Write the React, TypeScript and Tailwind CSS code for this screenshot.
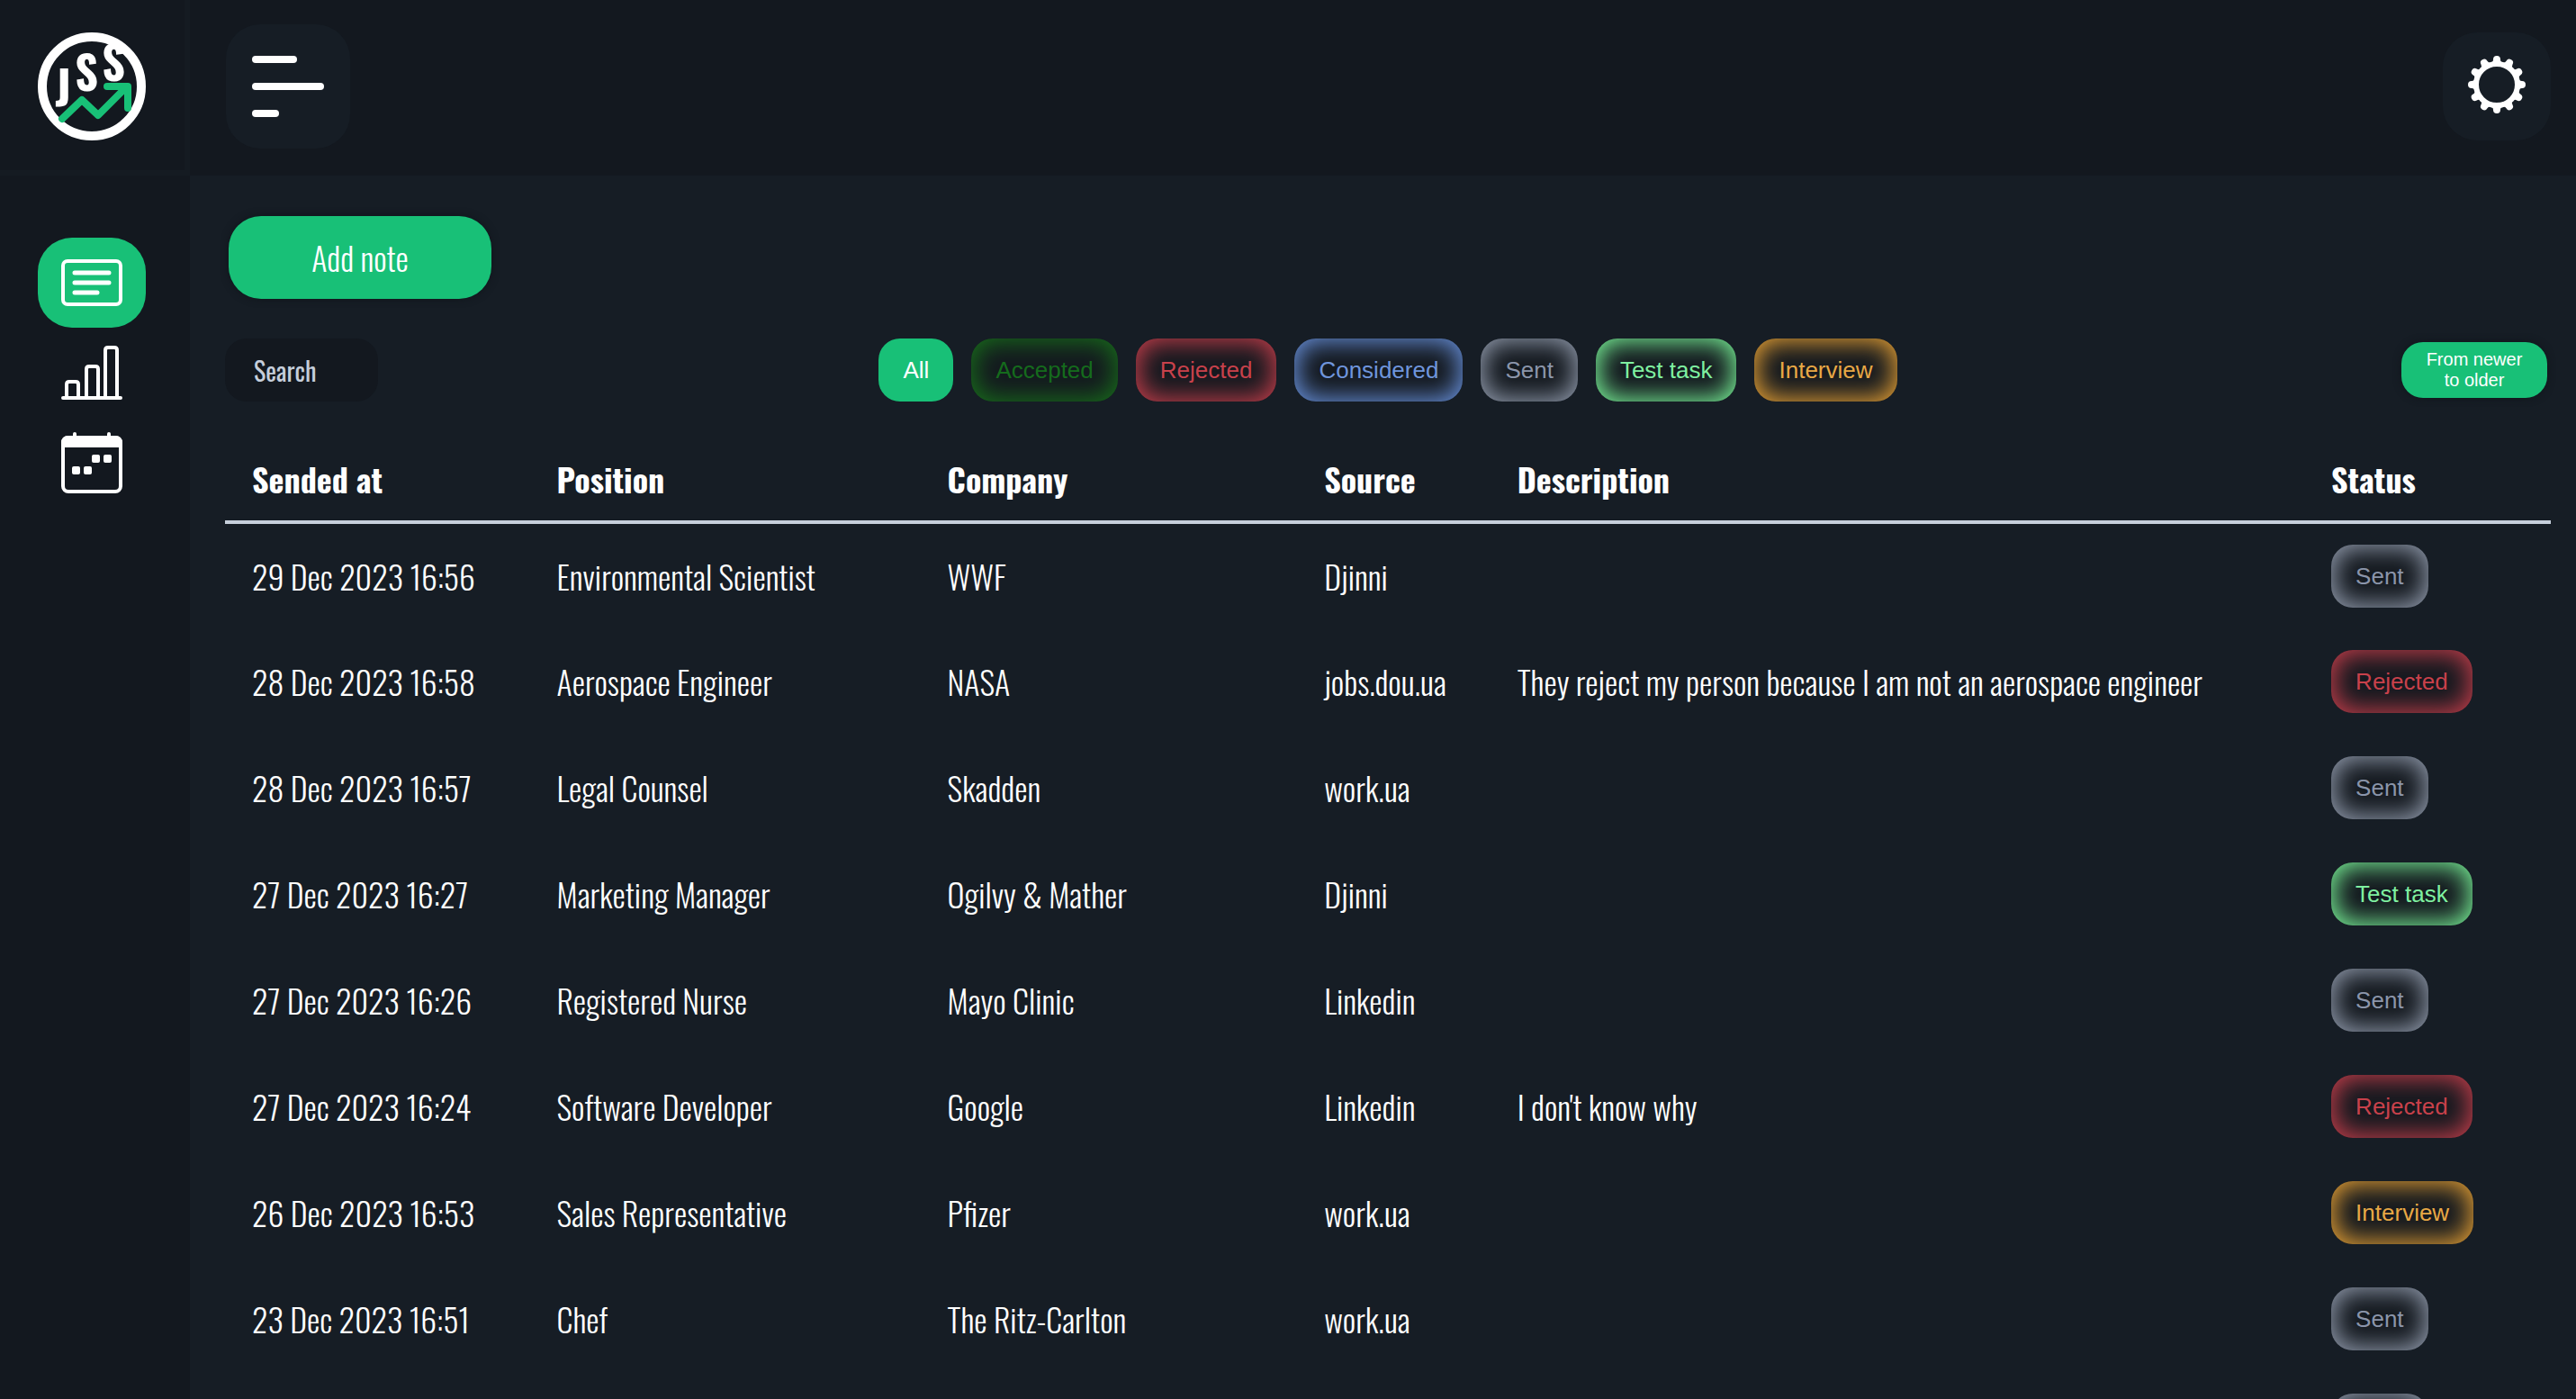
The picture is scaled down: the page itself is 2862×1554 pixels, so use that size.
import React from "react";

type Status = "Accepted" | "Rejected" | "Considered" | "Sent" | "Test task" | "Interview";

const tones: Record<Status, string> = {
  Accepted: "text-[#156b1c] shadow-[inset_0_0_28px_3px_#18701b]",
  Rejected: "text-[#c8414b] shadow-[inset_0_0_28px_3px_#cb3f4c]",
  Considered: "text-[#6f95dc] shadow-[inset_0_0_28px_3px_#6b95e2]",
  Sent: "text-[#8b95aa] shadow-[inset_0_0_28px_3px_#97a1b3]",
  "Test task": "text-[#7ff0a0] shadow-[inset_0_0_28px_3px_#7dfc9c]",
  Interview: "text-[#e8a845] shadow-[inset_0_0_28px_3px_#eda535]",
};

const filters: Status[] = ["Accepted", "Rejected", "Considered", "Sent", "Test task", "Interview"];

type Note = { date: string; position: string; company: string; source: string; description?: string; status: Status };

const notes: Note[] = [
  { date: "29 Dec 2023 16:56", position: "Environmental Scientist", company: "WWF", source: "Djinni", status: "Sent" },
  { date: "28 Dec 2023 16:58", position: "Aerospace Engineer", company: "NASA", source: "jobs.dou.ua", description: "They reject my person because I am not an aerospace engineer", status: "Rejected" },
  { date: "28 Dec 2023 16:57", position: "Legal Counsel", company: "Skadden", source: "work.ua", status: "Sent" },
  { date: "27 Dec 2023 16:27", position: "Marketing Manager", company: "Ogilvy & Mather", source: "Djinni", status: "Test task" },
  { date: "27 Dec 2023 16:26", position: "Registered Nurse", company: "Mayo Clinic", source: "Linkedin", status: "Sent" },
  { date: "27 Dec 2023 16:24", position: "Software Developer", company: "Google", source: "Linkedin", description: "I don't know why", status: "Rejected" },
  { date: "26 Dec 2023 16:53", position: "Sales Representative", company: "Pfizer", source: "work.ua", status: "Interview" },
  { date: "23 Dec 2023 16:51", position: "Chef", company: "The Ritz-Carlton", source: "work.ua", status: "Sent" },
  { date: "", position: "", company: "", source: "", status: "Sent" },
];

function Logo() {
  return (
    <svg viewBox="0 0 120 120" className="size-[120px]" role="img" aria-label="JSS">
      <circle cx="60" cy="60" r="55" fill="none" stroke="#fff" strokeWidth="10" />
      <g fill="#fff" fontWeight="700" fontSize="50" textAnchor="middle">
        <text x="28" y="81">J</text>
        <text x="54" y="65">S</text>
        <text x="84" y="54">S</text>
      </g>
      <path d="M27 96 49 75 67 92 98 61M77 60H100V84" fill="none" stroke="#18c077" strokeWidth="8" strokeLinecap="round" strokeLinejoin="round" />
    </svg>
  );
}

const teeth = Array.from({ length: 12 }, (_, i) => i * 30);

function GearIcon() {
  return (
    <svg viewBox="0 0 64 64" className="size-16" fill="#fff" aria-hidden="true">
      <circle cx="32" cy="32" r="23" fill="none" stroke="#fff" strokeWidth="6" />
      {teeth.map((angle) => (
        <path key={angle} d="M25 8Q28 7 28 4A4 4 0 0 1 36 4Q36 7 39 8V9H25Z" transform={`rotate(${angle} 32 32)`} />
      ))}
    </svg>
  );
}

function ListIcon() {
  return (
    <svg viewBox="0 0 68 52" className="w-[68px]" fill="none" stroke="#fff" strokeWidth="4" strokeLinecap="round" aria-hidden="true">
      <rect x="2" y="2" width="64" height="48" rx="5" />
      <path d="M15 15H53M15 26H53M15 37H40" strokeWidth="5" />
    </svg>
  );
}

function ChartIcon() {
  return (
    <svg viewBox="0 0 68 60" className="w-[68px]" fill="none" stroke="#fff" strokeWidth="4" strokeLinecap="round" aria-hidden="true">
      <path d="M2 58H66M6 57V43Q6 40 9 40H16Q19 40 19 43V57M28 57V26Q28 23 31 23H38Q41 23 41 26V57M49 57V5Q49 2 52 2H59Q62 2 62 5V57" />
    </svg>
  );
}

function CalendarIcon() {
  return (
    <svg viewBox="0 0 68 68" className="w-[68px]" aria-hidden="true">
      <rect x="2" y="6" width="64" height="60" rx="6" fill="none" stroke="#fff" strokeWidth="4" />
      <path d="M0 17V12Q0 4 8 4H13V2a2 2 0 0 1 4 0V4H51V2a2 2 0 0 1 4 0V4H60Q68 4 68 12V17Z" fill="#fff" />
      <g fill="#fff">
        <rect x="34" y="25" width="9" height="9" rx="2" />
        <rect x="47" y="25" width="9" height="9" rx="2" />
        <rect x="12" y="38" width="9" height="9" rx="2" />
        <rect x="25" y="38" width="9" height="9" rx="2" />
      </g>
    </svg>
  );
}

function NavLink({ label, active, children }: { label: string; active?: boolean; children: React.ReactNode }) {
  return (
    <a href="#" aria-label={label} className={`flex h-[100px] w-[120px] items-center justify-center rounded-[38px] ${active ? "bg-[#18c077]" : ""}`}>
      {children}
    </a>
  );
}

const pill = "inline-flex h-[70px] items-center rounded-[24px] px-[27px] text-[26px] font-normal font-['Liberation_Sans',Arial,sans-serif]";

export default function App() {
  return (
    <div className="flex h-screen overflow-hidden bg-[#161d25] font-['Oswald','Liberation_Sans_Narrow',sans-serif] font-light text-white">
      <aside className="flex w-[211px] shrink-0 flex-col bg-[#13181f]">
        <div className="h-[195px] border-r-6 border-b-6 border-[#151b22] pt-9 pl-[42px]">
          <Logo />
        </div>
        <nav className="flex flex-col items-start pt-[69px] pl-[42px]">
          <NavLink label="Notes" active><ListIcon /></NavLink>
          <NavLink label="Statistics"><ChartIcon /></NavLink>
          <NavLink label="Calendar"><CalendarIcon /></NavLink>
        </nav>
      </aside>

      <div className="flex min-w-0 grow flex-col">
        <header className="flex h-[195px] shrink-0 items-center justify-between bg-[#13181f] pr-7 pb-1 pl-10">
          <button aria-label="Menu" className="flex size-[138px] flex-col justify-center gap-[22px] rounded-[38px] bg-[#161d25] pl-[29px]">
            <span className="h-2 w-[50px] rounded-full bg-white" />
            <span className="h-2 w-[80px] rounded-full bg-white" />
            <span className="h-2 w-[30px] rounded-full bg-white" />
          </button>
          <button aria-label="Settings" className="flex size-[120px] items-center justify-center rounded-[38px] bg-[#161d25] pb-1">
            <GearIcon />
          </button>
        </header>

        <main className="min-h-0 grow overflow-hidden pt-[45px] pr-7 pl-[39px]">
          <button className="ml-1 h-[92px] w-[292px] rounded-[36px] bg-[#18c077] text-[36px] shadow-[0_0_8px_#10151b]">Add note</button>

          <div className="mt-11 grid grid-cols-[1fr_auto_1fr] items-center">
            <input aria-label="Search" placeholder="Search" className="h-[70px] w-[170px] rounded-[24px] bg-[#13181f] px-8 text-[28px] font-normal placeholder:text-[#c5cedb]" />
            <div className="flex gap-5">
              <button className={`${pill} bg-[#18c077]`}>All</button>
              {filters.map((f) => (
                <button key={f} className={`${pill} bg-[#14191f] ${tones[f]}`}>{f}</button>
              ))}
            </div>
            <button className="mr-1 h-[62px] w-[162px] justify-self-end rounded-[24px] bg-[#18c077] px-6 font-['Liberation_Sans',Arial,sans-serif] text-[20px] leading-[23px] font-normal shadow-[0_0_8px_#10151b]">
              From newer to older
            </button>
          </div>

          <table className="mt-10 w-full table-fixed border-collapse text-left text-[36px] whitespace-nowrap">
            <thead>
              <tr className="h-[94px] border-b-4 border-[#c6cfdb]">
                <th className="w-[13.1%] pl-[30px]">Sended at</th>
                <th className="w-[16.8%] pl-[30px]">Position</th>
                <th className="w-[16.2%] pl-[30px]">Company</th>
                <th className="w-[8.3%] pl-[30px]">Source</th>
                <th className="pl-[30px]">Description</th>
                <th className="w-[10.6%] pl-[30px]">Status</th>
              </tr>
            </thead>
            <tbody>
              {notes.map((n, i) => (
                <tr key={i} className="h-[118px]">
                  <td className="pl-[30px]">{n.date}</td>
                  <td className="pl-[30px]">{n.position}</td>
                  <td className="pl-[30px]">{n.company}</td>
                  <td className="pl-[30px]">{n.source}</td>
                  <td className="pl-[30px]">{n.description}</td>
                  <td className="pl-[30px]">
                    <div className={`${pill} bg-[#14191f] align-middle ${tones[n.status]}`}>{n.status}</div>
                  </td>
                </tr>
              ))}
            </tbody>
          </table>
        </main>
      </div>
    </div>
  );
}
